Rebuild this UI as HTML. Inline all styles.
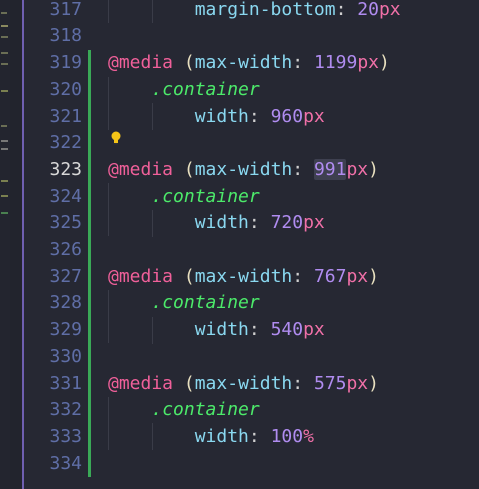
<!DOCTYPE html>
<html><head><style>
html,body{margin:0;padding:0;background:#262833;width:479px;height:489px;overflow:hidden;position:relative;font-family:"DejaVu Sans Mono","Liberation Mono",monospace;}
.mm{position:absolute;left:0;top:0;width:10px;height:489px;background:#23252f;}
.mm2{position:absolute;left:10px;top:0;width:12px;height:489px;background:#22242d;}
.vl{position:absolute;left:22px;top:0;width:2px;height:489px;background:#6f5fb0;}
.ln{position:absolute;left:24px;width:58px;text-align:right;font-size:18px;color:#5f6ea6;height:26.7px;line-height:26.7px;}
.ln.cur{color:#d8d8d8;}
.code{position:absolute;left:108px;font-size:18px;height:26.7px;line-height:26.7px;white-space:pre;color:#d0d0d0;}
.green{position:absolute;left:88px;top:50px;width:3px;height:427px;background:#3aa957;}
.guide{position:absolute;width:1px;background:#3a3c48;}
.at{color:#f0609a}.p{color:#8ad8f0}.n{color:#b08cf0}.u{color:#f070a8}.c{color:#4cea6a;font-style:italic}.w{color:#e8e0c0}
.hl{background:#3e4050;border-radius:2px}
.mmt{position:absolute;left:1px;height:2px;background:#6a6e55;}
</style></head><body>
<div class="mm"></div><div class="mm2"></div><div class="vl"></div>
<div class="mmt" style="top:12px;width:6px"></div>
<div class="mmt" style="top:25px;width:7px;background:#8a8a60"></div>
<div class="mmt" style="top:36px;width:7px"></div>
<div class="mmt" style="top:52px;width:7px"></div>
<div class="mmt" style="top:63px;width:7px"></div>
<div class="mmt" style="top:90px;width:7px;background:#7a8050"></div>
<div class="mmt" style="top:125px;width:6px"></div>
<div class="mmt" style="top:140px;width:7px;background:#777"></div>
<div class="mmt" style="top:148px;width:7px;background:#777"></div>
<div class="mmt" style="top:180px;width:7px;background:#7a8050"></div>
<div class="mmt" style="top:195px;width:7px;background:#7a8050"></div>
<div class="mmt" style="top:212px;width:7px;background:#4a8050"></div>
<div class="green"></div>
<div class="guide" style="left:108px;top:0;height:23px"></div>
<div class="guide" style="left:152px;top:0;height:23px"></div>
<div class="guide" style="left:108px;top:77px;height:53px"></div>
<div class="guide" style="left:152px;top:103px;height:27px"></div>
<div class="guide" style="left:108px;top:183px;height:53px"></div>
<div class="guide" style="left:152px;top:210px;height:27px"></div>
<div class="guide" style="left:108px;top:290px;height:53px"></div>
<div class="guide" style="left:152px;top:317px;height:27px"></div>
<div class="guide" style="left:108px;top:397px;height:53px"></div>
<div class="guide" style="left:152px;top:423px;height:27px"></div>
<div class="ln" style="top:-3.3px">317</div>
<div class="ln" style="top:23.4px">318</div>
<div class="ln" style="top:50.1px">319</div>
<div class="ln" style="top:76.8px">320</div>
<div class="ln" style="top:103.5px">321</div>
<div class="ln" style="top:130.2px">322</div>
<div class="ln cur" style="top:156.9px">323</div>
<div class="ln" style="top:183.6px">324</div>
<div class="ln" style="top:210.3px">325</div>
<div class="ln" style="top:237px">326</div>
<div class="ln" style="top:263.7px">327</div>
<div class="ln" style="top:290.4px">328</div>
<div class="ln" style="top:317.1px">329</div>
<div class="ln" style="top:343.8px">330</div>
<div class="ln" style="top:370.5px">331</div>
<div class="ln" style="top:397.2px">332</div>
<div class="ln" style="top:423.9px">333</div>
<div class="ln" style="top:450.6px">334</div>
<div class="code" style="top:-3.3px">        <span class="p">margin-bottom</span>: <span class="n">20</span><span class="u">px</span></div>
<div class="code" style="top:50.1px"><span class="at">@media</span> <span class="w">(</span><span class="p">max-width</span>: <span class="n">1199</span><span class="u">px</span><span class="w">)</span></div>
<div class="code" style="top:76.8px">    <span class="c">.container</span></div>
<div class="code" style="top:103.5px">        <span class="p">width</span>: <span class="n">960</span><span class="u">px</span></div>
<svg style="position:absolute;left:110px;top:130px" width="12" height="16" viewBox="0 0 12 16"><circle cx="6" cy="6" r="4.5" fill="#f5c518"/><rect x="4" y="9" width="4" height="4" fill="#f5c518"/><rect x="4.5" y="13" width="3" height="1.5" fill="#333"/></svg>
<div class="code" style="top:156.9px"><span class="at">@media</span> <span class="w">(</span><span class="p">max-width</span>: <span class="n hl">991</span><span class="u">px</span><span class="w">)</span></div>
<div class="code" style="top:183.6px">    <span class="c">.container</span></div>
<div class="code" style="top:210.3px">        <span class="p">width</span>: <span class="n">720</span><span class="u">px</span></div>
<div class="code" style="top:263.7px"><span class="at">@media</span> <span class="w">(</span><span class="p">max-width</span>: <span class="n">767</span><span class="u">px</span><span class="w">)</span></div>
<div class="code" style="top:290.4px">    <span class="c">.container</span></div>
<div class="code" style="top:317.1px">        <span class="p">width</span>: <span class="n">540</span><span class="u">px</span></div>
<div class="code" style="top:370.5px"><span class="at">@media</span> <span class="w">(</span><span class="p">max-width</span>: <span class="n">575</span><span class="u">px</span><span class="w">)</span></div>
<div class="code" style="top:397.2px">    <span class="c">.container</span></div>
<div class="code" style="top:423.9px">        <span class="p">width</span>: <span class="n">100</span><span class="u">%</span></div>
</body></html>
